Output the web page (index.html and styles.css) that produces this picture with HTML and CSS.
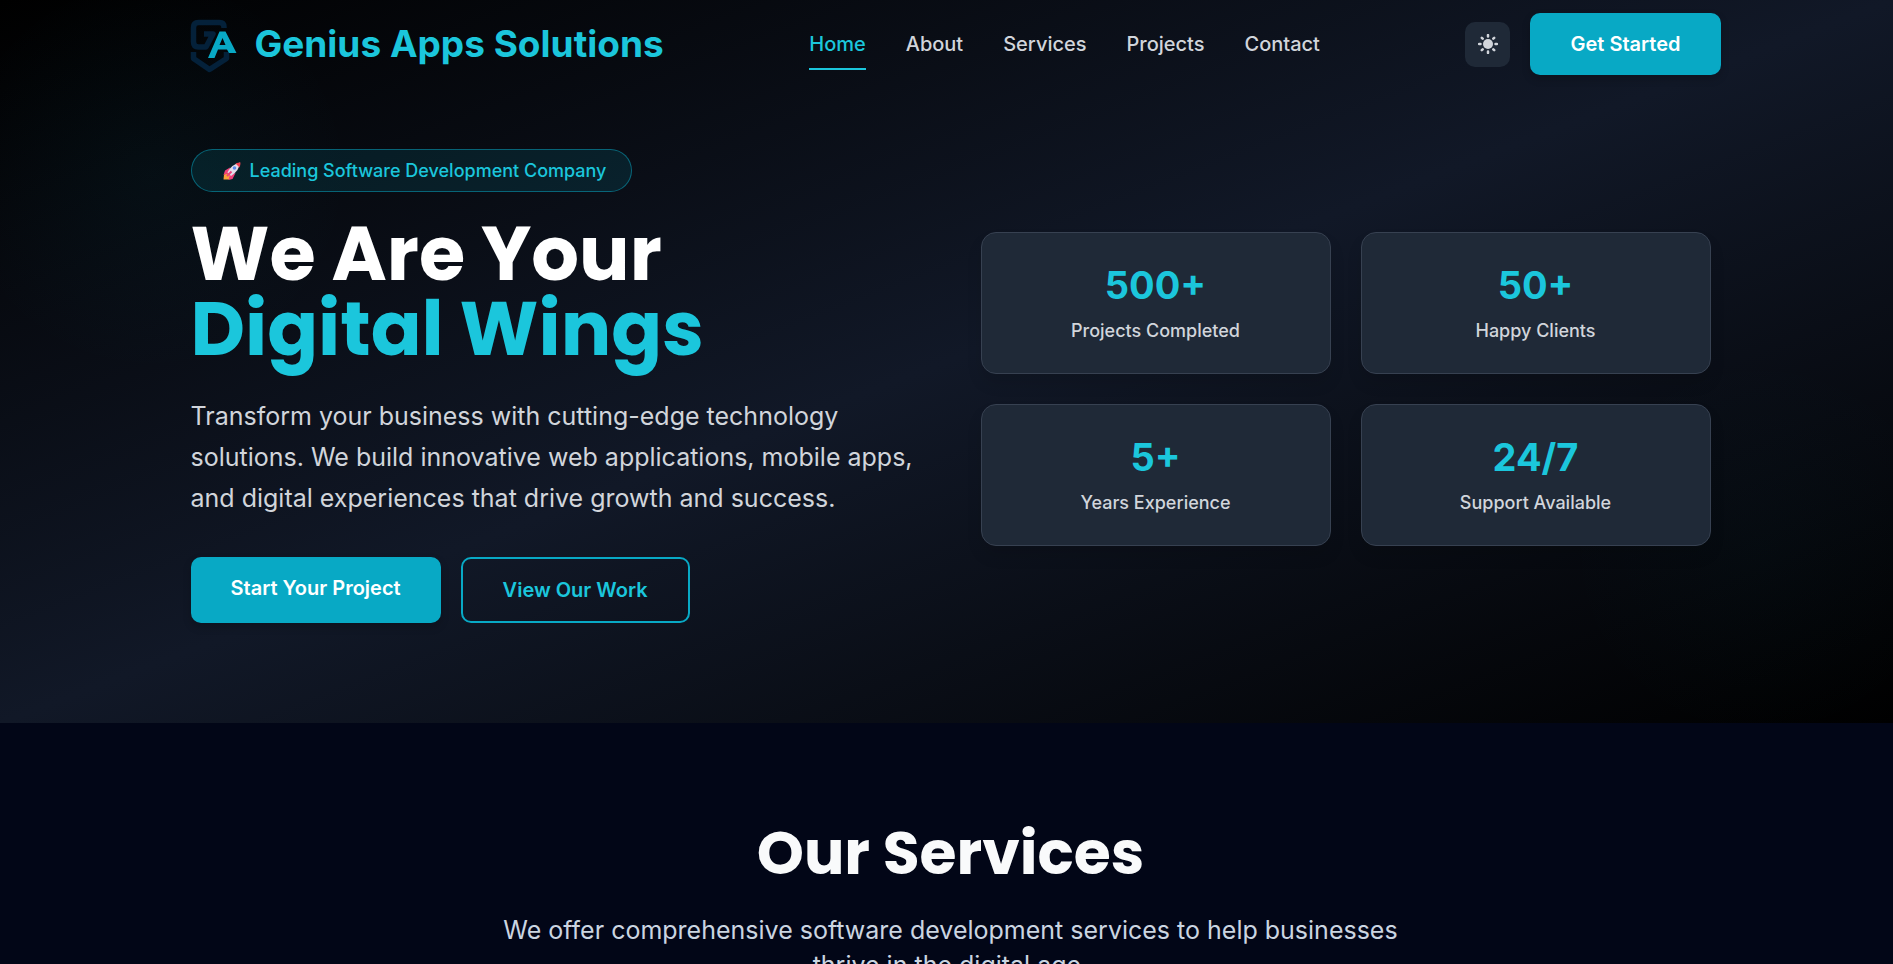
FILE: index.html
```html
<!DOCTYPE html>
<html lang="en">
  <head>
    <meta charset="UTF-8">
    <meta name="viewport" content="width=device-width, initial-scale=1.0">
    <title>Genius Apps Solutions</title>
    <link rel="stylesheet" href="styles.css">
  </head>

  <body>
    <div class="hero">
      <header class="navbar">
        <a href="#" class="brand">
          <svg class="brand-logo" viewBox="0 -1 70 70" aria-hidden="true">
            <g fill="none" stroke="#04213a" stroke-width="5.500" stroke-linejoin="round">
              <path d="M43 18v-1q0-4.500-4.500-4.500H17.500q-5 0-5 5v14.500q0 5 5 5h7.500l7-13h-9"/>
              <path d="M12.500 42v6.500l16 11 17-11v-6.500"/>
            </g>
            <path d="M27 48 38.500 21.500H44.500L55.500 43H48L46 39.500H37L33.500 48ZM38.500 35H44.500L41.500 28Z" fill="#08a9c5" fill-rule="evenodd"/>
          </svg>
          <span>Genius Apps Solutions</span>
        </a>

        <nav class="menu">
          <a href="#" class="menu-link active">Home</a>
          <a href="#about" class="menu-link">About</a>
          <a href="#services" class="menu-link">Services</a>
          <a href="#projects" class="menu-link">Projects</a>
          <a href="#contact" class="menu-link">Contact</a>
        </nav>

        <div class="actions">
          <button type="button" class="theme-btn" aria-label="Toggle theme">
            <svg viewBox="0 0 20 20" width="20" height="20" aria-hidden="true">
              <circle cx="10" cy="10" r="5" fill="#d1d5db"/>
              <path d="M10 1v1.500M10 17.500V19M1 10h1.500M17.500 10H19M3.800 3.800l.900.900M15.300 15.300l.900.900M3.800 16.200l.900-.900M15.300 4.700l.900-.900" stroke="#d1d5db" stroke-width="2.500" stroke-linecap="round"/>
            </svg>
          </button>
          <a href="#contact" class="btn btn-primary">Get Started</a>
        </div>
      </header>

      <section class="hero-inner">
        <div>
          <p class="badge">
            <svg viewBox="-1 -1 20 20" width="20" height="20" aria-hidden="true">
              <path d="M1 12.500 5 11l2.500 3-1.500 3.500L.500 17.500Z" fill="#f9a13a"/>
              <path d="M7 5.500 2 8.500.500 13 6 11ZM12.500 11 9.500 17l-4 1L7 12.500Z" fill="#f0407a"/>
              <path d="M4.500 10.500Q8 2.500 17 .500 16.500 8.500 8 14Z" fill="#e3dce9"/>
              <path d="M12.500 1.500Q15 .500 17.500.500 17.500 3 16.500 5.500Z" fill="#f2404f"/>
              <circle cx="11.500" cy="6" r="1.800" fill="#5b8def"/>
              <path d="M4 14 8.500 9.500" stroke="#f0407a" stroke-width="2"/>
            </svg>
            Leading Software Development Company
          </p>
          <h1 class="hero-title">We Are Your <span>Digital Wings</span></h1>
          <p class="hero-text">Transform your business with cutting-edge technology solutions. We build innovative web applications, mobile apps, and digital experiences that drive growth and success.</p>
          <div class="hero-buttons">
            <a href="#contact" class="btn btn-primary">Start Your Project</a>
            <a href="#projects" class="btn btn-outline">View Our Work</a>
          </div>
        </div>

        <div class="stats">
          <div class="stat">
            <div class="stat-number">500+</div>
            <div class="stat-label">Projects Completed</div>
          </div>
          <div class="stat">
            <div class="stat-number">50+</div>
            <div class="stat-label">Happy Clients</div>
          </div>
          <div class="stat">
            <div class="stat-number">5+</div>
            <div class="stat-label">Years Experience</div>
          </div>
          <div class="stat">
            <div class="stat-number">24/7</div>
            <div class="stat-label">Support Available</div>
          </div>
        </div>
      </section>
    </div>

    <section class="services" id="services">
      <h2 class="services-title">Our Services</h2>
      <p class="services-text">We offer comprehensive software development services to help businesses thrive in the digital age.</p>
    </section>
  </body>
</html>
```

FILE: styles.css
```css
* {
  box-sizing: border-box;
}

body {
  margin: 0;
  background: #020617;
  color: #d1d5db;
  font-family: Inter, "Liberation Sans", sans-serif;
  font-size: 20px;
  line-height: 30px;
  overflow-x: hidden;
}

h1, h2, p {
  margin: 0;
}

a {
  color: inherit;
  text-decoration: none;
}

.hero {
  padding: 0 0 100px 8px;
  background:
    radial-gradient(circle at 8% 24%, rgba(6, 182, 212, 0.04), transparent 200px),
    radial-gradient(circle at 93% 76%, rgba(6, 182, 212, 0.02), transparent 200px),
    linear-gradient(to bottom right, #000, #111827, #000);
}

/* navbar */
.navbar {
  display: flex;
  align-items: center;
  justify-content: space-between;
  max-width: 1600px;
  height: 88px;
  margin: 0 auto;
  padding: 0 30px;
}

.brand {
  display: flex;
  align-items: center;
  gap: 4px;
  color: #1bc6dc;
  font-size: 37px;
  font-weight: 700;
}

.brand-logo {
  width: 70px;
  height: 70px;
}

.menu {
  display: flex;
  gap: 40px;
}

.menu-link {
  padding: 11px 0 9px;
  border-bottom: 2px solid transparent;
  font-weight: 500;
}

.menu-link.active {
  color: #1bc6dc;
  border-color: #1bc6dc;
}

.actions {
  display: flex;
  align-items: center;
  gap: 20px;
}

.theme-btn {
  display: flex;
  align-items: center;
  justify-content: center;
  width: 45px;
  height: 45px;
  padding: 0;
  border: 0;
  border-radius: 10px;
  background: #1f2937;
  cursor: pointer;
}

.btn {
  padding: 16px 40px;
  border-radius: 10px;
  font-weight: 600;
}

.btn-primary {
  background: #08a9c5;
  color: #fff;
  box-shadow: 0 4px 8px rgba(0, 0, 0, 0.2);
}

.btn-outline {
  border: 2px solid #08a9c5;
  color: #1bc6dc;
}

/* hero */
.hero-inner {
  display: grid;
  grid-template-columns: 1fr 1fr;
  align-items: center;
  gap: 60px;
  max-width: 1600px;
  margin: 0 auto;
  padding: 61px 40px 0;
}

.badge {
  display: flex;
  align-items: center;
  gap: 8px;
  width: fit-content;
  padding: 8px 25px 8px 30px;
  border: 1px solid rgba(8, 169, 197, 0.5);
  border-radius: 22px;
  background: rgba(8, 169, 197, 0.12);
  color: #1bc6dc;
  font-size: 18px;
  font-weight: 500;
  line-height: 25px;
}

.hero-title {
  margin-top: 24px;
  color: #fff;
  font-family: Poppins, Inter, sans-serif;
  font-size: 75px;
  font-weight: 700;
  line-height: 75px;
}

.hero-title span {
  display: block;
  color: #1bc6dc;
}

.hero-text {
  margin-top: 30px;
  font-size: 25px;
  line-height: 41px;
}

.hero-buttons {
  display: flex;
  gap: 20px;
  margin-top: 38px;
}

.stats {
  display: grid;
  grid-template-columns: 1fr 1fr;
  gap: 30px;
  padding-top: 5px;
}

.stat {
  padding: 30px;
  border: 1px solid #374151;
  border-radius: 15px;
  background: #1f2937;
  box-shadow: 0 10px 15px rgba(0, 0, 0, 0.1);
  text-align: center;
}

.stat-number {
  color: #1bc6dc;
  font-size: 38px;
  font-weight: 700;
  line-height: 45px;
}

.stat-label {
  margin-top: 10px;
  font-size: 18px;
  font-weight: 500;
  line-height: 25px;
}

/* services */
.services {
  padding: 100px 0 100px 8px;
  text-align: center;
}

.services-title {
  color: #f9fafb;
  font-family: Poppins, Inter, sans-serif;
  font-size: 60px;
  font-weight: 700;
  line-height: 60px;
}

.services-text {
  max-width: 960px;
  margin: 30px auto 0;
  color: #cbd5e1;
  font-size: 25px;
  line-height: 35px;
}
```
